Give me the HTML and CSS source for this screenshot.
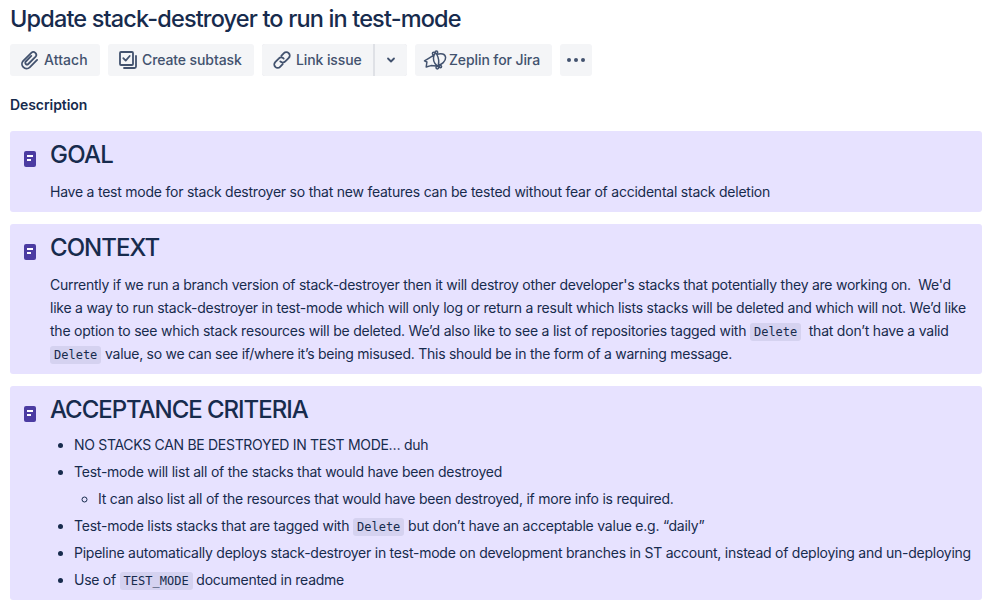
FILE: index.html
```html
<!DOCTYPE html>
<html lang="en">
<head>
<meta charset="utf-8">
<title>Update stack-destroyer to run in test-mode</title>
<link rel="stylesheet" href="styles.css">
</head>
<body>
<svg width="0" height="0" class="symbols" aria-hidden="true">
  <symbol id="note" viewBox="0 0 12 16"><rect width="12" height="16" rx="2" fill="#4b3ba2"/><path d="M3 5h6M3 9h4" stroke="#fff" stroke-width="2"/></symbol>
</svg>
<main class="issue">
  <h1 class="title"><span>Update stack-destroyer to run in test-mode</span></h1>
  <div class="toolbar">
    <button class="btn attach"><svg width="20" height="20" viewBox="0 0 20 20"><path d="M11.1 5.4 5.6 11a1.7 1.7 0 0 0 2.5 2.5l7.1-7.1a2.9 2.9 0 0 0-4.1-4.1L3 10.3a4.6 4.6 0 0 0 6.5 6.5l7.4-7.4" transform="translate(.2 .5)"/></svg><span>Attach</span></button>
    <button class="btn subtask"><svg width="20" height="20" viewBox="0 0 20 20"><rect x="2" y="2" width="13" height="13" rx="1"/><path d="m5.3 8.2 2.4 2.4 4-4.6M18 6v10.5a1.5 1.5 0 0 1-1.5 1.5H6"/></svg><span>Create subtask</span></button>
    <div class="split">
      <button class="btn link"><svg width="20" height="20" viewBox="0 0 20 20"><path d="m9.3 5.8 2.6-2.6a3.3 3.3 0 0 1 4.9 4.7l-3.5 3.5a3.3 3.3 0 0 1-5 0M10.7 14.2l-2.6 2.6a3.3 3.3 0 0 1-4.9-4.7l3.5-3.5a3.3 3.3 0 0 1 5 0"/></svg><span>Link issue</span></button>
      <button class="btn more" aria-label="More link options"><svg width="10" height="8" viewBox="0 0 10 8"><path d="m2 2.5 3 3 3-3"/></svg></button>
    </div>
    <button class="btn zeplin"><svg width="24" height="22" viewBox="0 0 24 22"><path d="M14 5.3C18 4 22.3 4.6 22.6 8.5 22.8 12.5 18.5 15.5 15.5 16.2M10.8 6.2 6.5 8.8 1.5 11.8 3.9 13 3.2 18 8 16.6 13.2 17M11 6c-1.2 4-.3 8 3 10.6M13.6 5c2 3.6 2.6 7.6 1.7 11.4"/><circle cx="10.7" cy="4.6" r="1.3"/><circle cx="13.4" cy="3.2" r="1.3"/><circle cx="14.3" cy="18.6" r="1.3"/><circle cx="17.4" cy="17.6" r="1.2"/></svg><span>Zeplin for Jira</span></button>
    <button class="btn dots" aria-label="Actions"><i></i><i></i><i></i></button>
  </div>
  <h2 class="label"><span>Description</span></h2>
  <section class="panel">
    <svg class="note" width="12" height="16"><use href="#note"/></svg>
    <div class="content">
      <h3><span class="h-goal">GOAL</span></h3>
      <p><span class="l0">Have a test mode for stack destroyer so that new features can be tested without fear of accidental stack deletion</span></p>
    </div>
  </section>
  <section class="panel">
    <svg class="note" width="12" height="16"><use href="#note"/></svg>
    <div class="content">
      <h3><span class="h-context">CONTEXT</span></h3>
      <p><span class="l1">Currently if we run a branch version of stack-destroyer then it will destroy other developer's stacks that potentially they are working on.&nbsp; We'd</span><br>
      <span class="l2">like a way to run stack-destroyer in test-mode which will only log or return a result which lists stacks will be deleted and which will not. We’d like</span><br>
      <span class="l3">the option to see which stack resources will be deleted. We’d also like to see a list of repositories tagged with <code>Delete</code>&nbsp; that don’t have a valid</span><br>
      <span class="l4"><code>Delete</code> value, so we can see if/where it’s being misused. This should be in the form of a warning message.</span></p>
    </div>
  </section>
  <section class="panel">
    <svg class="note" width="12" height="16"><use href="#note"/></svg>
    <div class="content">
      <h3><span class="h-accept">ACCEPTANCE CRITERIA</span></h3>
      <ul>
        <li><span class="b1">NO STACKS CAN BE DESTROYED IN TEST MODE… duh</span></li>
        <li><span class="b2">Test-mode will list all of the stacks that would have been destroyed</span>
          <ul><li><span class="b3">It can also list all of the resources that would have been destroyed, if more info is required.</span></li></ul>
        </li>
        <li><span class="b4">Test-mode lists stacks that are tagged with <code>Delete</code> but don’t have an acceptable value e.g. “daily”</span></li>
        <li><span class="b5">Pipeline automatically deploys stack-destroyer in test-mode on development branches in ST account, instead of deploying and un-deploying</span></li>
        <li><span class="b6">Use of <code>TEST_MODE</code> documented in readme</span></li>
      </ul>
    </div>
  </section>
</main>
</body>
</html>
```
FILE: styles.css
```css
* { box-sizing: border-box; }
body { margin: 0; background: #fff; color: #172b4d; font: 14px/23px Inter, "Liberation Sans", sans-serif; letter-spacing: -0.23px; }
.symbols { position: absolute; }
.issue { padding: 5px 8px 0 10px; white-space: nowrap; }
h1, h2, h3, p, ul { margin: 0; padding: 0; }
.title { font-size: 23.5px; line-height: 28px; font-weight: 500; letter-spacing: -0.84px; }
.toolbar { display: flex; gap: 8px; margin-top: 11px; }
.btn { display: flex; align-items: center; height: 32px; padding: 0 0 0 10px; border: 0; border-radius: 3px; background: #f4f5f7; color: #42526e; font: 500 14px/32px Inter, sans-serif; letter-spacing: -0.1px; }
.btn svg { fill: none; stroke: #42526e; stroke-width: 1.8; stroke-linecap: round; stroke-linejoin: round; flex: none; }
.btn svg + span { margin-left: 4px; }
.attach { width: 90px; letter-spacing: 0.08px; }
.subtask { width: 146px; }
.split { display: flex; gap: 2px; background: #dfe1e6; border-radius: 3px; }
.link { width: 111px; border-radius: 3px 0 0 3px; }
.more { width: 32px; padding: 0; justify-content: center; border-radius: 0 3px 3px 0; }
.zeplin { width: 137px; padding-left: 8px; }
.zeplin svg { stroke-width: 1.5; }
.zeplin svg + span { margin-left: 2px; }
.dots { width: 32px; padding: 0; justify-content: center; gap: 3px; }
.dots i { width: 4px; height: 4px; border-radius: 50%; background: #42526e; }
.label { margin: 19px 0 16px; font-size: 14px; line-height: 20px; font-weight: 600; letter-spacing: -0.07px; }
.panel { display: flex; gap: 14px; padding: 8px 8px 8px 14px; margin-bottom: 12px; background: #e7e2ff; border-radius: 3px; }
.note { margin-top: 12px; flex: none; }
h3 { font-size: 24px; line-height: 28px; font-weight: 500; letter-spacing: -0.03em; padding-top: 2px; height: 32px; }
.h-context { letter-spacing: -0.95px; }
.h-accept { letter-spacing: -1.04px; }
.content p { padding-top: 9px; padding-bottom: 1px; }
ul { padding-left: 24px; }
.content > ul { padding: 7px 0 1px 24px; }
li + li, li > ul { margin-top: 4px; }
.l1 { letter-spacing: -0.247px; }
.l2 { letter-spacing: -0.239px; }
.l3 { letter-spacing: -0.222px; }
.l4 { letter-spacing: -0.272px; }
.b1 { letter-spacing: -0.305px; }
.b3 { letter-spacing: -0.238px; }
.b4 { letter-spacing: -0.22px; }
.b5 { letter-spacing: -0.243px; }
.b6 { letter-spacing: -0.26px; }
code { font: 12px/18px "DejaVu Sans Mono", monospace; letter-spacing: 0; background: rgba(9, 30, 66, 0.08); border-radius: 3px; padding: 2px 4px; }
```
